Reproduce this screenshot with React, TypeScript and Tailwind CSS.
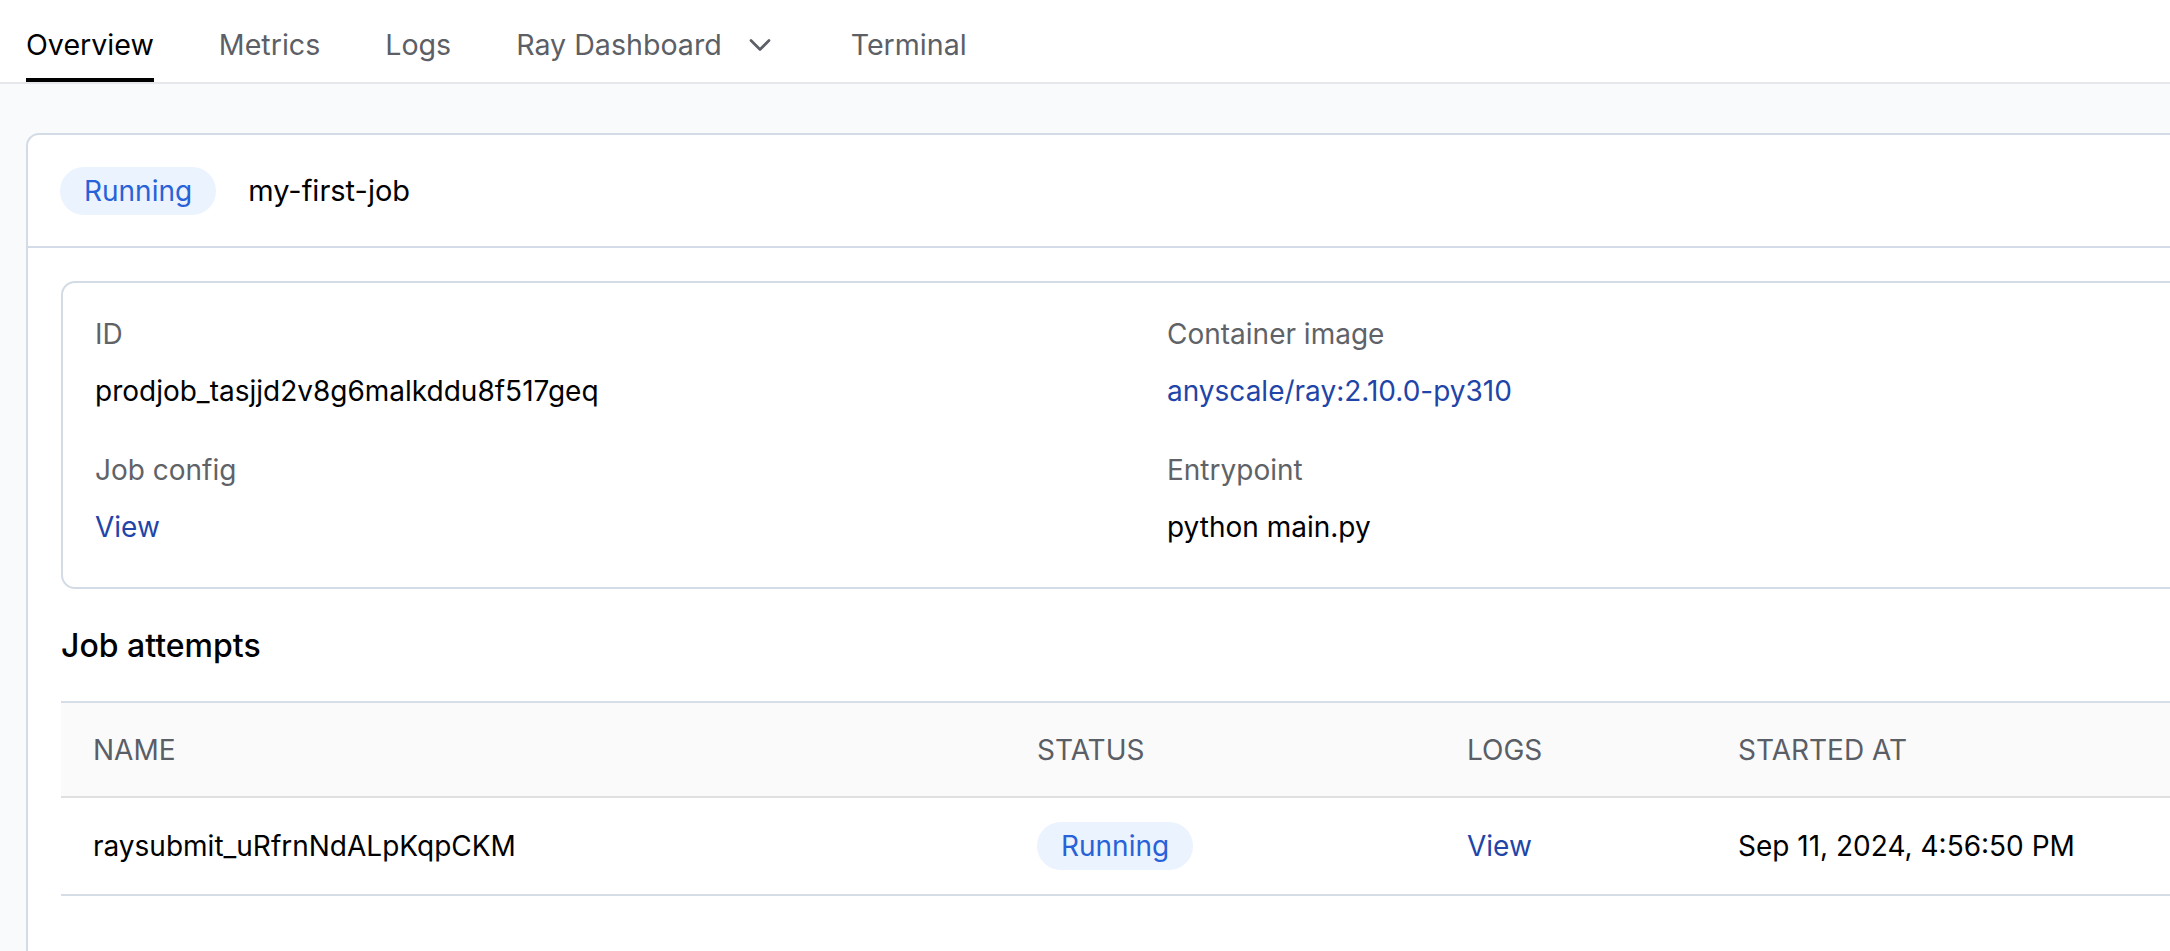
import { ChevronDown } from "lucide-react";

const TABS = [
  { label: "Overview", active: true },
  { label: "Metrics" },
  { label: "Logs" },
  { label: "Ray Dashboard", menu: true },
  { label: "Terminal" },
];

const FIELDS = [
  { label: "ID", value: "prodjob_tasjjd2v8g6malkddu8f517geq" },
  { label: "Container image", value: "anyscale/ray:2.10.0-py310", link: true },
  { label: "Job config", value: "View", link: true },
  { label: "Entrypoint", value: "python main.py" },
];

const COLS = "grid grid-cols-[944px_430px_271px_1fr]";

function Badge({ children }: { children: React.ReactNode }) {
  return (
    <span className="inline-flex h-[48px] items-center rounded-full bg-[#ebf3fe] px-6 text-[#2862d8]">
      {children}
    </span>
  );
}

export default function App() {
  return (
    <div className="h-[951px] w-full overflow-hidden bg-[#f8fafc] font-['Inter',sans-serif] text-[28px] leading-[1.5] text-black">
      {/* Tabs */}
      <nav className="flex h-[84px] gap-[65px] border-b-2 border-[#e5e7eb] bg-white pl-[26px] text-[28.6px]">
        {TABS.map((tab) => (
          <div
            key={tab.label}
            className={`relative flex items-center pt-2 ${tab.active ? "text-black" : "text-[#5c5f66]"}`}
          >
            {tab.label}
            {tab.menu && <ChevronDown className="ml-[20px] mr-[8px]" size={36} strokeWidth={1.8} />}
            {tab.active && <span className="absolute inset-x-0 bottom-0 h-[4px] bg-black" />}
          </div>
        ))}
      </nav>

      <main className="px-[26px] pt-[49px]">
        <div className="h-[900px] w-[2300px] rounded-t-[13px] border-2 border-[#d3dce6] bg-white">
          {/* Header */}
          <div className="flex h-[113px] items-center gap-8 border-b-2 border-[#d3dce6] px-8">
            <Badge>Running</Badge>
            <span className="text-[29px]">my-first-job</span>
          </div>

          <div className="p-[33px]">
            {/* Details */}
            <div className="grid grid-cols-[1072px_1fr] gap-y-[37px] rounded-[14px] border-2 border-[#d3dce6] px-8 pt-[30px] pb-[39px]">
              {FIELDS.map((f) => (
                <div key={f.label} className="flex flex-col gap-[15px]">
                  <span className="text-[#5f6368]">{f.label}</span>
                  <span className={f.link ? "text-[#1f45a8]" : "text-black"}>{f.value}</span>
                </div>
              ))}
            </div>

            <h2 className="mt-[34px] text-[32px] leading-[46px] font-medium">Job attempts</h2>

            {/* Attempts table */}
            <div className="mt-[32px]">
              <div className={`${COLS} h-[97px] items-center border-t-2 border-b-2 border-t-[#d5dde6] border-b-[#e0e0e0] bg-[#fafafa] uppercase text-[#5a5e66]`}>
                <div className="px-8">Name</div>
                <div className="px-8">Status</div>
                <div className="px-8">Logs</div>
                <div className="px-8">Started at</div>
              </div>
              <div className={`${COLS} h-[98px] items-center border-b-2 border-[#d5dde6]`}>
                <div className="px-8">raysubmit_uRfrnNdALpKqpCKM</div>
                <div className="px-8">
                  <Badge>Running</Badge>
                </div>
                <div className="px-8 text-[#1f45a8]">View</div>
                <div className="px-8">Sep 11, 2024, 4:56:50 PM</div>
              </div>
            </div>
          </div>
        </div>
      </main>
    </div>
  );
}
